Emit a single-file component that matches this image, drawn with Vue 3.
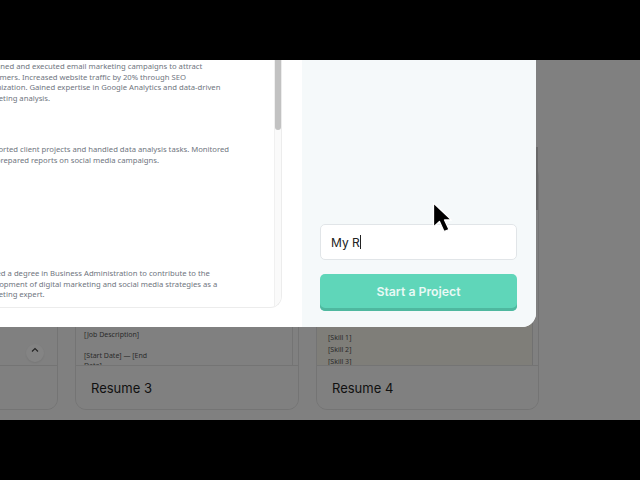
<script setup>
const blocks = [
  { gap: 0, lines: ['Designed and executed email marketing campaigns to attract', 'customers. Increased website traffic by 20% through SEO', 'optimization. Gained expertise in Google Analytics and data-driven', 'marketing analysis.'] },
  { gap: 41, lines: ['Supported client projects and handled data analysis tasks. Monitored', 'and prepared reports on social media campaigns.'] },
  { gap: 103, lines: ['Earned a degree in Business Administration to contribute to the', 'development of digital marketing and social media strategies as a', 'marketing expert.'] }
]
</script>

<template>
  <div class="stage">
    <div class="bar"></div>
    <main class="main">
      <div class="cards">
        <article class="card">
          <div class="preview first">
            <span class="chev">
              <svg width="8" height="6" viewBox="0 0 8 6"><path d="M1 4.5 4 1.5 7 4.5" fill="none" stroke="#222" stroke-width="1.1"/></svg>
            </span>
          </div>
          <div class="foot">Resume 2</div>
        </article>
        <article class="card">
          <div class="preview third">
            <p>[Job Description]</p>
            <p class="spaced">[Start Date] — [End<br>Date]</p>
          </div>
          <div class="foot">Resume 3</div>
        </article>
        <article class="card">
          <div class="preview fourth">
            <p>[Skill 1]</p>
            <p>[Skill 2]</p>
            <p>[Skill 3]</p>
          </div>
          <div class="foot">Resume 4</div>
        </article>
      </div>

      <div class="edge"></div>

      <section class="modal">
        <div class="left">
          <div class="doc">
            <div class="doc-text">
              <div v-for="(b, i) in blocks" :key="i" class="block" :style="{ marginTop: b.gap + 'px' }">
                <div v-for="l in b.lines" :key="l" class="line">{{ l }}</div>
              </div>
            </div>
            <div class="track"><div class="thumb"></div></div>
          </div>
        </div>
        <div class="right">
          <div class="field">My R<span class="caret"></span></div>
          <button class="start">Start a Project</button>
        </div>
      </section>

      <svg class="cursor" width="22" height="32" viewBox="0 0 22 32">
        <path d="M1.5 1V25L7.5 19.5 12 29.5 17 27.5 12.5 18H19.5Z" fill="#000" stroke="#fff" stroke-width="1.3" stroke-linejoin="round"/>
      </svg>
    </main>
    <div class="bar"></div>
  </div>
</template>

<style>
html, body { margin: 0; background: #000; overflow: hidden; }
</style>

<style scoped>
.stage { width: 640px; height: 480px; display: flex; flex-direction: column; overflow: hidden; font-family: Inter, "Liberation Sans", sans-serif; }
.bar { height: 60px; background: #000; flex: none; }
.main { position: relative; height: 360px; background: #808080; overflow: hidden; display: flex; flex-direction: column; justify-content: flex-end; padding-bottom: 10px; box-sizing: border-box; }

.cards { display: grid; grid-template-columns: 207px 224px 223px; column-gap: 17px; margin-left: -149px; }
.card { display: flex; flex-direction: column; border: 1px solid #747474; border-radius: 11px; box-sizing: border-box; overflow: hidden; }
.preview { height: 199px; box-sizing: border-box; font-family: "Noto Sans", sans-serif; font-size: 7px; color: #2b2b2b; overflow: hidden; }
.preview p { margin: 0; }
.first { position: relative; }
.chev { position: absolute; right: 13px; bottom: 3px; width: 18px; height: 18px; padding-bottom: 6px; box-sizing: border-box; border-radius: 50%; background: #848484; box-shadow: 0 1px 2px rgba(0,0,0,.08); display: flex; align-items: center; justify-content: center; }
.third { padding: 164px 0 0 8px; margin-right: 5px; border-right: 1px solid #747474; line-height: 10px; }
.third .spaced { margin-top: 11px; }
.fourth { padding: 166px 0 0 11px; margin-right: 5px; background: #7f7e79; border-right: 1px solid #717171; line-height: 12px; }
.foot { height: 44px; box-sizing: border-box; flex: none; display: flex; align-items: center; padding-left: 15px; border-top: 1px solid #747474; background: #808080; font-size: 13px; color: #111; }

.edge { position: absolute; left: 536px; top: 87px; width: 2px; height: 63px; background: #696969; }

.modal { position: absolute; left: -200px; top: 0; width: 736px; height: 267px; display: grid; grid-template-columns: 502px 234px; background: #fff; border-bottom-right-radius: 14px; overflow: hidden; }
.left { padding: 0 20px 19px 0; box-sizing: border-box; min-height: 0; }
.doc { height: 248px; box-sizing: border-box; border: 1px solid #ececec; border-top: 0; border-radius: 0 0 12px 12px; position: relative; overflow: hidden; background: #fff; }
.doc-text { padding: 1px 0 0 179px; font-family: "Noto Sans", sans-serif; font-size: 7.7px; line-height: 10.5px; color: #6f7580; white-space: nowrap; }
.track { position: absolute; right: 0; top: 0; bottom: 0; width: 7px; background: #fafafa; border-left: 1px solid #f0f0f0; box-sizing: border-box; }
.thumb { height: 70px; background: #c2c2c2; border-radius: 0 0 3px 3px; }

.right { background: #f5f9fa; padding: 0 19px 16px 18px; box-sizing: border-box; display: flex; flex-direction: column; justify-content: flex-end; gap: 14px; }
.field { height: 36px; box-sizing: border-box; border: 1px solid #e1e5e8; border-radius: 5px; background: #fff; display: flex; align-items: center; padding-left: 10px; font-size: 12px; color: #222; }
.caret { width: 1px; height: 14px; background: #222; }
.start { height: 37px; border: 0; border-radius: 5px; background: #5fd6b9; box-shadow: inset 0 -3px 0 #4fb89f; padding: 0 0 2px; color: #e9f9f5; font: 600 12.3px Inter, "Liberation Sans", sans-serif; }

.cursor { position: absolute; left: 432px; top: 142px; }
</style>
